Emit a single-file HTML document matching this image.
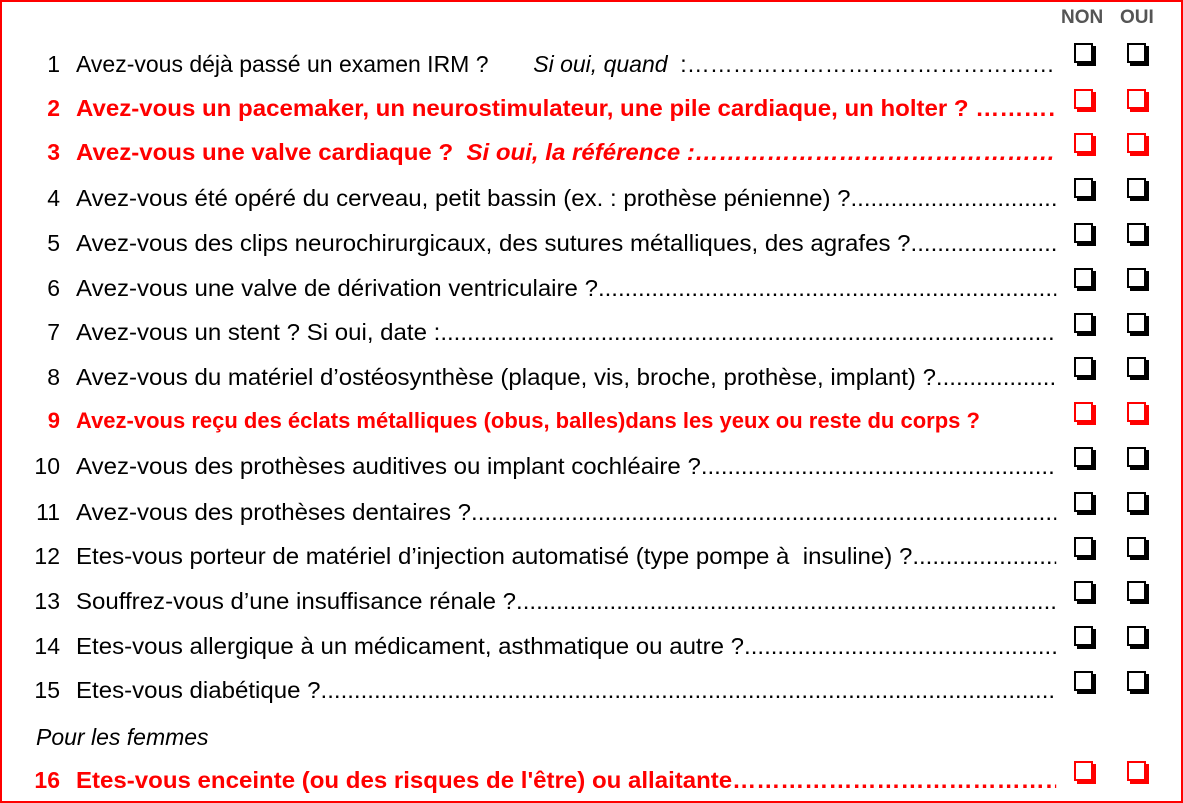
<!DOCTYPE html>
<html><head><meta charset="utf-8"><style>
html,body{margin:0;padding:0;background:#fff;}
body{width:1183px;height:803px;position:relative;overflow:hidden;font-family:"Liberation Sans",sans-serif;}
.frame{position:absolute;left:0;top:0;width:1179px;height:799px;border:2px solid #f00;}
.hdr{position:absolute;top:7px;font-weight:bold;font-size:19px;color:#555;}
.row{position:absolute;left:0;width:1056px;height:26px;font-size:23px;white-space:nowrap;color:#000;line-height:26px;}
.num{position:absolute;left:0;width:60px;text-align:right;}
.in{position:absolute;left:76px;width:938px;display:flex;align-items:baseline;transform:scaleX(1.045);transform-origin:left;}
.in.n{width:980px;transform:none;}
.txt{flex:none;}
.dots{flex:1;overflow:hidden;white-space:nowrap;}
.red{color:#f00;font-weight:bold;}
.box{position:absolute;width:15px;height:16px;border:2px solid #000;box-shadow:3px 3px 0 #000;background:#fff;}
.box.r{border-color:#f00;box-shadow:3px 3px 0 #f00;}
</style></head><body>
<div class="frame"></div>
<div class="hdr" style="left:1061px">NON</div>
<div class="hdr" style="left:1120px">OUI</div>

<div class="row" style="top:51px"><span class="num">1</span><div class="in n"><span class="txt">Avez-vous déjà passé un examen IRM ?&nbsp;&nbsp;&nbsp;&nbsp;&nbsp;&nbsp;&nbsp;<i>Si oui, quand</i> &nbsp;:</span><span class="dots">…………………………………………………………………………………………………</span></div></div>
<div class="row red" style="top:95px"><span class="num">2</span><div class="in"><span class="txt">Avez-vous un pacemaker, un neurostimulateur, une pile cardiaque, un holter ?</span><span class="dots">&nbsp;………………………………………………………</span></div></div>
<div class="row red" style="top:139px"><span class="num">3</span><div class="in"><span class="txt">Avez-vous une valve cardiaque ? &nbsp;<i>Si oui, la référence :</i></span><span class="dots"><i>……………………………………………………………………………</i></span></div></div>
<div class="row" style="top:185px"><span class="num">4</span><div class="in"><span class="txt">Avez-vous été opéré du cerveau, petit bassin (ex. : prothèse pénienne) ?</span><span class="dots">......................................................................................</span></div></div>
<div class="row" style="top:230px"><span class="num">5</span><div class="in"><span class="txt">Avez-vous des clips neurochirurgicaux, des sutures métalliques, des agrafes ?</span><span class="dots">..............................................................</span></div></div>
<div class="row" style="top:275px"><span class="num">6</span><div class="in"><span class="txt">Avez-vous une valve de dérivation ventriculaire ?</span><span class="dots">.......................................................................................................................................</span></div></div>
<div class="row" style="top:319px"><span class="num">7</span><div class="in"><span class="txt">Avez-vous un stent ? Si oui, date :</span><span class="dots">.......................................................................................................................................................................................</span></div></div>
<div class="row" style="top:364px"><span class="num">8</span><div class="in"><span class="txt">Avez-vous du matériel d’ostéosynthèse (plaque, vis, broche, prothèse, implant) ?</span><span class="dots">...................................</span></div></div>
<div class="row red" style="top:408px;font-size:22px"><span class="num">9</span><div class="in n"><span class="txt">Avez-vous reçu des éclats métalliques (obus, balles)dans les yeux ou reste du corps ?</span></div></div>
<div class="row" style="top:453px"><span class="num">10</span><div class="in"><span class="txt">Avez-vous des prothèses auditives ou implant cochléaire ?</span><span class="dots">........................................................................................................................</span></div></div>
<div class="row" style="top:499px"><span class="num">11</span><div class="in"><span class="txt">Avez-vous des prothèses dentaires ?</span><span class="dots">....................................................................................................................................................................................</span></div></div>
<div class="row" style="top:543px"><span class="num">12</span><div class="in"><span class="txt">Etes-vous porteur de matériel d’injection automatisé (type pompe à &nbsp;insuline) ?</span><span class="dots">....................................................</span></div></div>
<div class="row" style="top:588px"><span class="num">13</span><div class="in"><span class="txt">Souffrez-vous d’une insuffisance rénale ?</span><span class="dots">..........................................................................................................................................................................</span></div></div>
<div class="row" style="top:633px"><span class="num">14</span><div class="in"><span class="txt">Etes-vous allergique à un médicament, asthmatique ou autre ?</span><span class="dots">......................................................................................................................</span></div></div>
<div class="row" style="top:677px"><span class="num">15</span><div class="in"><span class="txt">Etes-vous diabétique ?</span><span class="dots">...................................................................................................................................................................................................................</span></div></div>
<div class="row" style="top:724px"><i style="position:absolute;left:36px">Pour les femmes</i></div>
<div class="row red" style="top:767px"><span class="num">16</span><div class="in"><span class="txt">Etes-vous enceinte (ou des risques de l'être) ou allaitante</span><span class="dots">……………………………………………………………………………</span></div></div>

<div class="box" style="left:1074px;top:43px"></div><div class="box" style="left:1127px;top:43px"></div>
<div class="box r" style="left:1074px;top:89px"></div><div class="box r" style="left:1127px;top:89px"></div>
<div class="box r" style="left:1074px;top:133px"></div><div class="box r" style="left:1127px;top:133px"></div>
<div class="box" style="left:1074px;top:178px"></div><div class="box" style="left:1127px;top:178px"></div>
<div class="box" style="left:1074px;top:223px"></div><div class="box" style="left:1127px;top:223px"></div>
<div class="box" style="left:1074px;top:268px"></div><div class="box" style="left:1127px;top:268px"></div>
<div class="box" style="left:1074px;top:313px"></div><div class="box" style="left:1127px;top:313px"></div>
<div class="box" style="left:1074px;top:357px"></div><div class="box" style="left:1127px;top:357px"></div>
<div class="box r" style="left:1074px;top:402px"></div><div class="box r" style="left:1127px;top:402px"></div>
<div class="box" style="left:1074px;top:447px"></div><div class="box" style="left:1127px;top:447px"></div>
<div class="box" style="left:1074px;top:492px"></div><div class="box" style="left:1127px;top:492px"></div>
<div class="box" style="left:1074px;top:537px"></div><div class="box" style="left:1127px;top:537px"></div>
<div class="box" style="left:1074px;top:581px"></div><div class="box" style="left:1127px;top:581px"></div>
<div class="box" style="left:1074px;top:626px"></div><div class="box" style="left:1127px;top:626px"></div>
<div class="box" style="left:1074px;top:671px"></div><div class="box" style="left:1127px;top:671px"></div>
<div class="box r" style="left:1074px;top:761px"></div><div class="box r" style="left:1127px;top:761px"></div>
</body></html>
